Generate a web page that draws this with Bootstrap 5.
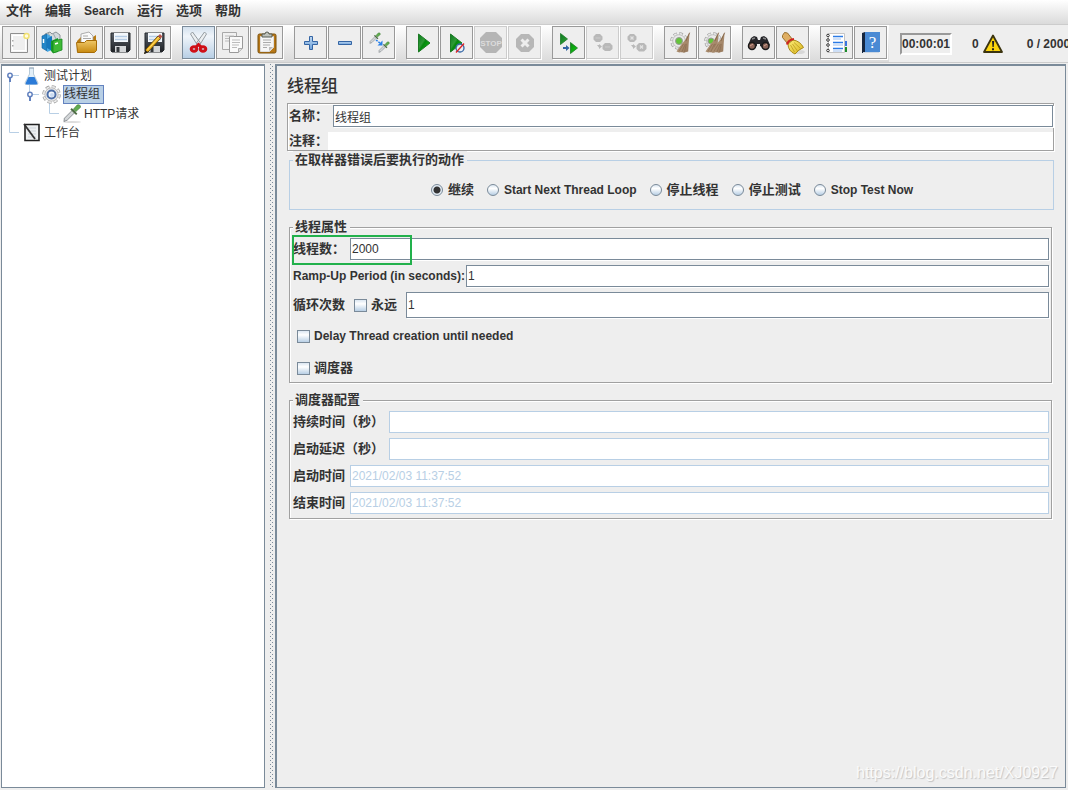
<!DOCTYPE html>
<html lang="zh-CN">
<head>
<meta charset="utf-8">
<meta name="viewport" content="width=device-width, initial-scale=1">
<title>线程组</title>
<link href="https://cdn.jsdelivr.net/npm/bootstrap@5.3.0/dist/css/bootstrap.min.css" rel="stylesheet">
<style>
  :root { --steel: #7a8a99; --sky: #b8cfe5; --ink: #333; --etch: #a0a0a0; }
  body { background: #eee; color: var(--ink); font: 12px/18px "Liberation Sans", "Noto Sans CJK SC", sans-serif; overflow: hidden; }
  .menu-strip { height: 25px; padding-left: 6px; gap: 13px; background: linear-gradient(#fff, #dadada); border-bottom: 1px solid #ccc; }
  .menu-strip button, .zh { font-size: 13px; font-weight: 700; }
  .menu-strip button { line-height: 22px; color: var(--ink); }
  .menu-strip .latin { font-size: 12px; }
  .en { font-size: 12px; font-weight: 700; }
  .tool-row { height: 38px; border-bottom: 1px solid #ccc; }
  .tool-set { height: 37px; gap: 11px; padding: 1px 2px; background: linear-gradient(#fff, #dadada); }
  .tool-group { gap: 1px; }
  .tool { width: 33px; height: 33px; padding: 0; background: #eee; border: 1px solid #999; box-shadow: 1px 1px 0 #fff; display: block; }
  .tool svg { display: block; width: 31px; height: 31px; }
  .tool.hot { background: linear-gradient(#d4e1ee, #f0f5fa 30%, #b8cfe5); border-color: var(--steel); }
  .tool:disabled { border-color: #ccc; }
  .clock { width: 52px; height: 22px; padding: 0; margin-left: 11px; border: 2px solid; border-color: #999 #fff #fff #999; font-weight: 700; line-height: 18px; background: #eee; }
  .status { font-weight: 700; white-space: nowrap; }
  .errors { margin-left: 20px; }
  .panes { min-height: 0; padding-bottom: 2px; padding-top: 1px; }
  .pane { border: 1px solid var(--steel); border-top-width: 2px; min-height: 0; }
  .tree-pane { width: 264px; background: #fff; margin-left: 1px; }
  .tree-row { height: 19px; line-height: 18px; }
  .tree-row svg { display: block; flex: none; height: 19px; }
  .picked { background: var(--sky); border: 1px solid #6382bf; height: 19px; line-height: 17px; padding-right: 3px; }
  .grip { width: 10px; background-image: linear-gradient(var(--steel) 1px, transparent 1px), linear-gradient(var(--steel) 1px, transparent 1px); background-size: 1px 4px; background-repeat: repeat-y; background-position: 5px 0, 7px 2px; }
  .work { border-left-width: 2px; margin-right: 2px; padding: 11px 11px 0 10px; }
  .pane-title { font-size: 17px; line-height: 20px; font-weight: 500; margin: 0 0 6px; }
  .etched { border: 1px solid var(--etch); box-shadow: 1px 1px 0 #fff, inset 1px 1px 0 #fff; }
  .name-box { padding: 1px 0 0 1px; height: 48px; }
  fieldset.group { border: 1px solid var(--etch); margin: 0 2px; padding: 2px 2px 0 3px; box-shadow: 1px 1px 0 #fff, inset 1px 1px 0 #fff; }
  fieldset.group.soft { border-color: var(--sky); box-shadow: none; margin-right: 0; }
  .group legend { font-size: 13px; line-height: 18px; font-weight: 700; padding: 0 3px 0 2px; margin: 0; background: #eee; }
  .field { border: 1px solid var(--steel); border-radius: 0; background: #fff; height: 22px; padding: 0 1px; font-size: 12px; line-height: 18px; color: var(--ink); box-shadow: 1px 1px 0 #fff; min-width: 0; outline: 0; }
  .field:disabled { border-color: var(--sky); color: var(--sky); box-shadow: none; background: #fff; }
  .field.tall { height: 26px; }
  .field.plain { border: 0; height: 18px; box-shadow: none; }
  .line { margin-bottom: 5px; }
  .dot, .tick { appearance: none; margin: 0; flex: none; border: 1px solid var(--steel); background: linear-gradient(#dce7f2, #fff 35%, #b8cfe5); }
  .dot { width: 12px; height: 12px; border-radius: 50%; }
  .dot:checked { background: radial-gradient(circle, #333 0 3px, #e4edf5 4px); }
  .tick { width: 13px; height: 13px; }
  .choices { height: 38px; gap: 13px; }
  .choices label { display: flex; align-items: center; gap: 5px; }
  .lab-s { width: 57px; } .lab-m { width: 96px; } .lab-l { width: 173px; }
  .marker { left: -1px; top: -3px; width: 120px; height: 30px; border: 2px solid #22b14c; pointer-events: none; }
  .stamp { right: 7px; bottom: 4px; font-size: 16px; line-height: 20px; color: #fafafa; text-shadow: 1px 1px 1px #c4c4c4; }
</style>
</head>
<body class="d-flex flex-column vh-100">

<svg width="0" height="0" class="position-absolute" aria-hidden="true">
  <defs>
    <linearGradient id="gGreen" x1="0" y1="0" x2="1" y2="1"><stop offset="0" stop-color="#0a7a20"/><stop offset=".4" stop-color="#2f9a35"/><stop offset=".5" stop-color="#07870f"/><stop offset="1" stop-color="#12cf12"/></linearGradient>
    <linearGradient id="gGold" x1="0" y1="0" x2="0" y2="1"><stop offset="0" stop-color="#efc768"/><stop offset="1" stop-color="#c88a10"/></linearGradient>
    <linearGradient id="gBlue" x1="0" y1="0" x2="0" y2="1"><stop offset="0" stop-color="#bcd6f0"/><stop offset="1" stop-color="#6fa3dc"/></linearGradient>
    <linearGradient id="gYellow" x1="0" y1="0" x2="1" y2="1"><stop offset="0" stop-color="#fbec78"/><stop offset="1" stop-color="#d9b51c"/></linearGradient>
    <linearGradient id="gBroom" x1="0" y1="0" x2="1" y2="1"><stop offset="0" stop-color="#c4a888"/><stop offset="1" stop-color="#94765a"/></linearGradient>
    <linearGradient id="gDark" x1="0" y1="0" x2="0" y2="1"><stop offset="0" stop-color="#5a6068"/><stop offset="1" stop-color="#1f2226"/></linearGradient>
    <symbol id="disk" viewBox="0 0 31 31"><path d="M6 6h19v17l-2 2H7l-1-1z" fill="url(#gDark)" stroke="#25282c"/><path d="M9 6h14v9H9z" fill="#f4f8fc"/><path d="M10 9.500h12M10 12.500h12" stroke="#b4cbe4" stroke-width="1.500"/><path d="M10 19h11v6H10z" fill="#d4d6d8"/><path d="M11.500 20h3v5h-3z" fill="#33373b"/></symbol>
    <symbol id="dropper" viewBox="0 0 20 19"><path d="M2 15L11 6l2.500 2.500L5 17l-3.500 1.500z" fill="#d3d6d8" stroke="#7c8387" stroke-width=".9"/><path d="M9 5l6 6" stroke="#4d6b43" stroke-width="2"/><path d="M11.500 5.500l4-4.500q3.500-1 3.500 2.500l-5 4.500z" fill="#62ad50" stroke="#3d7834" stroke-width=".7"/></symbol>
    <symbol id="cog" viewBox="0 0 20 20"><circle cx="10" cy="10" r="8" fill="none" stroke="#a2a2a2" stroke-width="3.600" stroke-dasharray="3.900 2.383"/><circle cx="10" cy="10" r="8" fill="none" stroke="#ededed" stroke-width="2" stroke-dasharray="3 3.283" stroke-dashoffset="-.45"/><circle cx="10" cy="10" r="7" fill="#e9e9e9" stroke="#b4b4b4" stroke-width=".8"/></symbol>
    <symbol id="broom" viewBox="0 0 16 22"><path d="M14.500 0l-5 8-3.500 4-5.500 8 3 1 2.500-.5 2 1 3-1 2-.5.500-8z" fill="url(#gBroom)"/><path d="M8 12l-5 8M10 12l-4 9M11 12l-2 9" stroke="#84664a" stroke-width=".6" fill="none"/><path d="M14.500 0L10.500 9" stroke="#84664a" stroke-width="1"/></symbol>
  </defs>
</svg>

<nav class="menu-strip d-flex flex-shrink-0 align-items-start" aria-label="菜单">
  <button class="border-0 bg-transparent p-0">文件</button>
  <button class="border-0 bg-transparent p-0">编辑</button>
  <button class="border-0 bg-transparent p-0 latin">Search</button>
  <button class="border-0 bg-transparent p-0">运行</button>
  <button class="border-0 bg-transparent p-0">选项</button>
  <button class="border-0 bg-transparent p-0">帮助</button>
</nav>

<header class="tool-row d-flex flex-shrink-0 overflow-hidden">
  <div class="tool-set d-flex flex-shrink-0">
    <div class="tool-group d-flex">
      <button class="tool" aria-label="新建"><svg viewBox="0 0 31 31"><path d="M7.500 6.500h17v19h-17z" fill="#f5f5f5" stroke="#8f8f8f"/><path d="M9.500 8.500h13v15h-13z" fill="#efefef" stroke="#fff"/><path d="M9 13h1.500v1.500H9zM9 18h1.500v1.500H9z" fill="#aaa"/><circle cx="23.500" cy="9" r="2.500" fill="#fffbe0" stroke="#f0e070" stroke-width="1.500"/></svg></button>
      <button class="tool" aria-label="模板"><svg viewBox="0 0 31 31"><path d="M8 7l5-2 2 2 4-2 4 3v7H8z" fill="#d3d9dc" stroke="#8b9498"/><path d="M11 6l4 7M16 6l3 6" stroke="#9aa4a8"/><path d="M5 9l5-2v17l-5-3z" fill="#2386c8" stroke="#0f62a0" stroke-width=".6"/><path d="M10 7l5 3v13l-5 2z" fill="#49a9e4"/><path d="M10 12l5-3v15l-5-3z" fill="#1677bd"/><path d="M14 14l7-3v14l-5 1-2-2z" fill="#169b27"/><path d="M16 14l9-2v11l-9 3z" fill="#3fb936" stroke="#15891f" stroke-width=".8"/><path d="M6.500 12v4M18 17l3-1" stroke="#fff" stroke-width="1.500"/></svg></button>
      <button class="tool" aria-label="打开"><svg viewBox="0 0 31 31"><path d="M6 14l4-4h12l3-2v16H6z" fill="#b97b10"/><path d="M10 7l8-2 4 4v8H10z" fill="#fafafa" stroke="#999" stroke-width=".8"/><path d="M12 9h5M12 11.500h8" stroke="#aaa"/><path d="M5.500 15.500h8l2-2h10v10l-2 2h-17z" fill="url(#gGold)" stroke="#a66c08"/></svg></button>
      <button class="tool" aria-label="保存"><svg><use href="#disk"/></svg></button>
      <button class="tool" aria-label="另存为"><svg viewBox="0 0 31 31"><use href="#disk"/><path d="M7 22L19 9l2.500 2.500-12 13-4 2z" fill="#f2b51d" stroke="#4e3607" stroke-width=".8"/><path d="M8.500 23L20 10" stroke="#fbdc72"/><path d="M19 9l2-2 2.500 2.500-2 2z" fill="#b6574d"/><path d="M5 27l1.500-4 2.500 2.500z" fill="#222"/></svg></button>
    </div>
    <div class="tool-group d-flex">
      <button class="tool hot" aria-label="剪切"><svg viewBox="0 0 31 31"><path d="M7.500 7l2-2 8 11-2.500 3zM23.500 7l-2-2-8 11 2.500 3z" fill="#eceff1" stroke="#8b9398" stroke-width=".9"/><g fill="none" stroke="#cf1018" stroke-width="3"><ellipse cx="11" cy="22" rx="2.800" ry="2.300"/><ellipse cx="20" cy="22" rx="2.800" ry="2.300"/><path d="M13 20l2.500-2.500 2.500 2.500"/></g></svg></button>
      <button class="tool" aria-label="复制"><svg viewBox="0 0 31 31"><g fill="#f1f1f1" stroke="#a9a9a9"><path d="M5.500 5.500h14v17h-14z"/><path d="M12.500 9.500h13v12l-4 4h-9z" fill="#fafafa" stroke="#999"/><path d="M21.500 25.500v-4h4" fill="#ddd"/></g><path d="M8 9h9M8 11.500h4M8 14h4M15 13h8M15 15.500h8M15 18h7M15 20.500h5" stroke="#bbb"/></svg></button>
      <button class="tool" aria-label="粘贴"><svg viewBox="0 0 31 31"><rect x="7" y="7" width="18" height="19" rx="1.500" fill="#b87818" stroke="#79500d"/><path d="M9.500 9.500h13v11l-4 4h-9z" fill="#f6f6f6" stroke="#ddd"/><path d="M22 20l-4 4v-4z" fill="#bbb"/><path d="M12 13h8M12 15.500h8M12 18h7M12 20.500h4" stroke="#aaa"/><path d="M11 10V7h3q0-2 2-2t2 2h3v3z" fill="#bfc3bc" stroke="#555a52"/></svg></button>
    </div>
    <div class="tool-group d-flex">
      <button class="tool" aria-label="展开"><svg viewBox="0 0 31 31"><path d="M14.500 9.500h3v5h5v3h-5v5h-3v-5h-5v-3h5z" fill="url(#gBlue)" stroke="#3465a4"/></svg></button>
      <button class="tool" aria-label="折叠"><svg viewBox="0 0 31 31"><path d="M9.500 14.500h13v3h-13z" fill="url(#gBlue)" stroke="#3465a4"/></svg></button>
      <button class="tool" aria-label="切换"><svg viewBox="0 0 31 31"><use href="#dropper" x="6" y="5" width="12" height="12"/><use href="#dropper" x="15" y="14" width="12" height="12"/><path d="M13 13l4 3" stroke="#2a80e8" stroke-width="1.500" stroke-dasharray="2 1"/><path d="M19.500 13.500v5h-5z" fill="#2a80e8"/></svg></button>
    </div>
    <div class="tool-group d-flex">
      <button class="tool" aria-label="启动"><svg viewBox="0 0 31 31"><path d="M11.500 7L23 16l-11.500 9z" fill="url(#gGreen)" stroke="#1c7a24"/></svg></button>
      <button class="tool" aria-label="无间隔启动"><svg viewBox="0 0 31 31"><path d="M9.500 7L21 16l-11.500 9z" fill="url(#gGreen)" stroke="#1c7a24"/><circle cx="19" cy="21" r="4" fill="#e9eff7" fill-opacity=".8" stroke="#3465a4" stroke-width="1.300"/><path d="M15 25.500l8-9" stroke="#e02020" stroke-width="1.300"/></svg></button>
      <button class="tool" disabled aria-label="停止"><svg viewBox="0 0 31 31"><path d="M11 5h10l6 6v9l-6 6H11l-6-6v-9z" fill="#b5b5b5"/><text x="16" y="18.500" font-size="8" font-weight="700" text-anchor="middle" fill="#dcdcdc">STOP</text></svg></button>
      <button class="tool" disabled aria-label="关闭"><svg viewBox="0 0 31 31"><path d="M12 7h8l5 5v8l-5 5h-8l-5-5v-8z" fill="#b7b7b7"/><path d="M12.500 12.500l7 7m0-7l-7 7" stroke="#eee" stroke-width="3"/></svg></button>
    </div>
    <div class="tool-group d-flex">
      <button class="tool" aria-label="远程启动"><svg viewBox="0 0 31 31"><path d="M7.500 6.500l7 5.500-7 5.500zM17.500 15.500l7 5.500-7 5.500z" fill="url(#gGreen)" stroke="#1c7a24" stroke-width=".8"/><path d="M10 20h3v-2l3.500 3-3.500 3v-2h-3z" fill="#3465a4"/></svg></button>
      <button class="tool" disabled aria-label="远程停止"><svg viewBox="0 0 31 31"><g fill="#b9b9b9"><path d="M9 7h4l2.500 2.500v3L13 15H9l-2.500-2.500v-3zM18 16h5l2.500 2.500v3.500L23 24h-5l-2.500-2v-3.500zM10 18h2v-1l3 2.500-3 2.500v-1.500z"/></g><path d="M8.500 11h5M18 20h5" stroke="#ccc"/></svg></button>
      <button class="tool" disabled aria-label="远程关闭"><svg viewBox="0 0 31 31"><g fill="#b9b9b9"><path d="M9 7h4l2.500 2.500v3L13 15H9l-2.500-2.500v-3zM18 16h5l2.500 2.500v3.500L23 24.500h-5l-2.500-2.500v-3.500zM10 18h2v-1l3 2.500-3 2.500v-1.500z"/></g><path d="M9.500 9.500l3 3m0-3l-3 3M19 18.500l3 3m0-3l-3 3" stroke="#e3e3e3" stroke-width="1.300"/></svg></button>
    </div>
    <div class="tool-group d-flex">
      <button class="tool" aria-label="清除"><svg viewBox="0 0 31 31"><use href="#cog" x="5" y="5" width="18" height="18"/><circle cx="14" cy="14" r="3.500" fill="#64c53a" stroke="#9a9a9a"/><use href="#broom" x="11" y="5" width="15" height="22"/></svg></button>
      <button class="tool" aria-label="清除全部"><svg viewBox="0 0 31 31"><use href="#cog" x="5" y="5" width="18" height="18"/><circle cx="12" cy="14" r="3" fill="#64c53a" stroke="#9a9a9a"/><use href="#broom" x="6" y="5" width="15" height="22"/><use href="#broom" x="12" y="5" width="15" height="22"/></svg></button>
    </div>
    <div class="tool-group d-flex">
      <button class="tool" aria-label="查找"><svg viewBox="0 0 31 31"><path d="M8 11l3-2 3 1 1 3h2l1-3 3-1 3 2 3 7-4 4-6-3v-2h-3v2l-6 3-3-4z" fill="#26262a"/><path d="M9 12l3-1M20 11l3 1" stroke="#888" stroke-width="1.500"/><circle cx="9" cy="19" r="3.500" fill="#8a6458" stroke="#191919" stroke-width="1.500"/><circle cx="22.500" cy="19" r="3.500" fill="#8a6458" stroke="#191919" stroke-width="1.500"/><path d="M7 19l3-2M21 19l3-2" stroke="#d2a290"/></svg></button>
      <button class="tool" aria-label="清除查找"><svg viewBox="0 0 31 31"><ellipse cx="22" cy="25" rx="6" ry="2" fill="#d8d8d8"/><path d="M5.500 8.500l2-3 3 .5 5 6.500-5 4-5-6z" fill="#dfae62" stroke="#98702f"/><path d="M11 17l5-4q7 1 10.500 7.500-5 2-8.500 6.500-7-3-7-10z" fill="url(#gYellow)" stroke="#a98a16"/><path d="M13.500 18l4 7M15.500 17l5 7M17 15.500l6.500 6" stroke="#bc9c1e" stroke-width=".8" fill="none"/><path d="M10 17.500q1-4.500 7-5.500" stroke="#d0231e" stroke-width="2.200" fill="none"/></svg></button>
    </div>
    <div class="tool-group d-flex">
      <button class="tool" aria-label="函数助手"><svg viewBox="0 0 31 31"><path d="M7.500 6.500h16v19h-16z" fill="#fff" stroke="#c5c5c5"/><path d="M24 14h2v5h-2z" fill="#3b76e0"/><path d="M24 20h2v5h-2z" fill="#1b8d2b"/><g stroke="#2c7be5" stroke-width="1.300"><path d="M12 9.500h10M12 15.500h10M12 21.500h10"/></g><path d="M12 12h8M12 18h10M12 24h9" stroke="#9dc0f0"/><g stroke="#333" fill="#fff" stroke-width="1"><circle cx="7" cy="8.500" r="1.300"/><circle cx="7" cy="13" r="1.300"/><circle cx="7" cy="18" r="1.300"/><circle cx="7" cy="23.500" r="1.300"/></g></svg></button>
      <button class="tool" aria-label="帮助"><svg viewBox="0 0 31 31"><path d="M7 6l3-1v21H7z" fill="#16263f"/><path d="M10 5h15v20H10z" fill="#4a8ad4"/><path d="M8 25.500h16" stroke="#ccd6e2"/><text x="17.500" y="20.500" font-size="17" text-anchor="middle" fill="#fff" font-family="Liberation Serif, serif">?</text></svg></button>
    </div>
  </div>
  <div class="status d-flex align-items-center flex-shrink-0">
    <output class="clock">00:00:01</output>
    <span class="errors">0</span>
    <svg width="20" height="19" viewBox="0 0 20 19" class="ms-1" aria-label="警告"><path d="M10 1.500L19 18H1z" fill="#fbd40c" stroke="#3b3410" stroke-width="1.800" stroke-linejoin="round"/><path d="M9 7h2.200l-.5 6h-1.200zM9 14.200h2v2H9z" fill="#222"/></svg>
    <span class="ms-4">0 / 2000</span>
  </div>
</header>

<div class="panes d-flex flex-fill">
  <aside class="pane tree-pane flex-shrink-0" aria-label="测试计划树">
    <div class="tree-row d-flex align-items-center">
      <svg width="42" viewBox="2 0 42 19"><path d="M9.500 9v10M12 9.500h7M29.500 16v3" stroke="#b8cfe5" fill="none"/><circle cx="10" cy="9.500" r="2.200" fill="#fff" stroke="#6382bf" stroke-width="1.500"/><path d="M10 11.500V16" stroke="#6382bf" stroke-width="2"/><path d="M29.500 2h4v6l4.500 9q0 2-2 2h-9q-2 0-2-2l4.500-9z" fill="#e2eff8" stroke="#9db6c9" stroke-width=".7"/><path d="M28.500 11h6l3 6.500-1 1h-10l-1-1z" fill="#2b7bd8"/><path d="M29 2h5" stroke="#9ab"/></svg><span>测试计划</span>
    </div>
    <div class="tree-row d-flex align-items-center">
      <svg width="61" viewBox="2 0 61 19"><path d="M9.500 0v19M29.500 0v9M32 9.500h7M49.500 17v2" stroke="#b8cfe5"/><circle cx="30" cy="9.500" r="2.200" fill="#fff" stroke="#6382bf" stroke-width="1.500"/><path d="M30 11.500V16" stroke="#6382bf" stroke-width="2"/><use href="#cog" x="42" y="0" width="19" height="19"/><circle cx="51.500" cy="9.500" r="4" fill="#f3f7fc" stroke="#4d6fa8" stroke-width="2"/><circle cx="52" cy="10" r="2" fill="#cbdcf2"/></svg><span class="picked">线程组</span>
    </div>
    <div class="tree-row d-flex align-items-center">
      <svg width="82" viewBox="2 0 82 19"><path d="M9.500 0v19M49.500 0v9.500H59" stroke="#b8cfe5" fill="none"/><ellipse cx="72" cy="18" rx="9" ry="1" fill="#ddd"/><use href="#dropper" x="62" y="0" width="20" height="18"/></svg><span>HTTP请求</span>
    </div>
    <div class="tree-row d-flex align-items-center">
      <svg width="42" viewBox="2 0 42 19"><path d="M9.500 0v9.500H19" stroke="#b8cfe5" fill="none"/><path d="M25 1.500h14v16H25z" fill="#eef0f2" stroke="#222" stroke-width="1.600"/><path d="M28 5h8M28 8h8M28 11h8M28 14h8" stroke="#ccd3d9"/><path d="M24 1l11 15" stroke="#333" stroke-width="1.800"/></svg><span>工作台</span>
    </div>
  </aside>

  <div class="grip flex-shrink-0"></div>

  <main class="pane work flex-fill position-relative">
    <h1 class="pane-title">线程组</h1>

    <div class="etched name-box">
      <div class="d-flex align-items-center line">
        <label class="zh" for="fName" style="width:44px">名称：</label>
        <input id="fName" class="field flex-fill" value="线程组">
      </div>
      <div class="d-flex align-items-center">
        <label class="zh" for="fNote" style="width:39px">注释：</label>
        <input id="fNote" class="field plain flex-fill">
      </div>
    </div>

    <fieldset class="group soft">
      <legend class="float-none w-auto">在取样器错误后要执行的动作</legend>
      <div class="choices d-flex justify-content-center align-items-center">
        <label class="zh"><input class="dot" type="radio" name="onerr" checked>继续</label>
        <label class="en"><input class="dot" type="radio" name="onerr">Start Next Thread Loop</label>
        <label class="zh"><input class="dot" type="radio" name="onerr">停止线程</label>
        <label class="zh"><input class="dot" type="radio" name="onerr">停止测试</label>
        <label class="en"><input class="dot" type="radio" name="onerr">Stop Test Now</label>
      </div>
    </fieldset>

    <fieldset class="group mt-2">
      <legend class="float-none w-auto">线程属性</legend>
      <div class="d-flex align-items-center line position-relative">
        <label class="zh lab-s" for="fThreads">线程数：</label>
        <input id="fThreads" class="field flex-fill" value="2000">
        <span class="marker position-absolute"></span>
      </div>
      <div class="d-flex align-items-center line">
        <label class="en lab-l" for="fRamp">Ramp-Up Period (in seconds):</label>
        <input id="fRamp" class="field flex-fill" value="1">
      </div>
      <div class="d-flex align-items-center">
        <label class="zh" for="fLoops" style="width:61px">循环次数</label>
        <label class="zh d-flex align-items-center gap-1" style="width:52px"><input class="tick" type="checkbox">永远</label>
        <input id="fLoops" class="field tall flex-fill" value="1">
      </div>
      <label class="en d-flex align-items-center gap-1 ms-1" style="height:36px"><input class="tick" type="checkbox">Delay Thread creation until needed</label>
      <label class="zh d-flex align-items-center gap-1 ms-1" style="height:28px"><input class="tick" type="checkbox">调度器</label>
    </fieldset>

    <fieldset class="group mt-2">
      <legend class="float-none w-auto">调度器配置</legend>
      <div class="d-flex align-items-center line">
        <label class="zh lab-m" for="fDur">持续时间（秒）</label>
        <input id="fDur" class="field flex-fill" disabled>
      </div>
      <div class="d-flex align-items-center line">
        <label class="zh lab-m" for="fDelay">启动延迟（秒）</label>
        <input id="fDelay" class="field flex-fill" disabled>
      </div>
      <div class="d-flex align-items-center line">
        <label class="zh lab-s" for="fStart">启动时间</label>
        <input id="fStart" class="field flex-fill" disabled value="2021/02/03 11:37:52">
      </div>
      <div class="d-flex align-items-center pb-1">
        <label class="zh lab-s" for="fEnd">结束时间</label>
        <input id="fEnd" class="field flex-fill" disabled value="2021/02/03 11:37:52">
      </div>
    </fieldset>

    <div class="stamp position-absolute">https://blog.csdn.net/XJ0927</div>
  </main>
</div>

<script src="https://cdn.jsdelivr.net/npm/bootstrap@5.3.0/dist/js/bootstrap.bundle.min.js"></script>
</body>
</html>
